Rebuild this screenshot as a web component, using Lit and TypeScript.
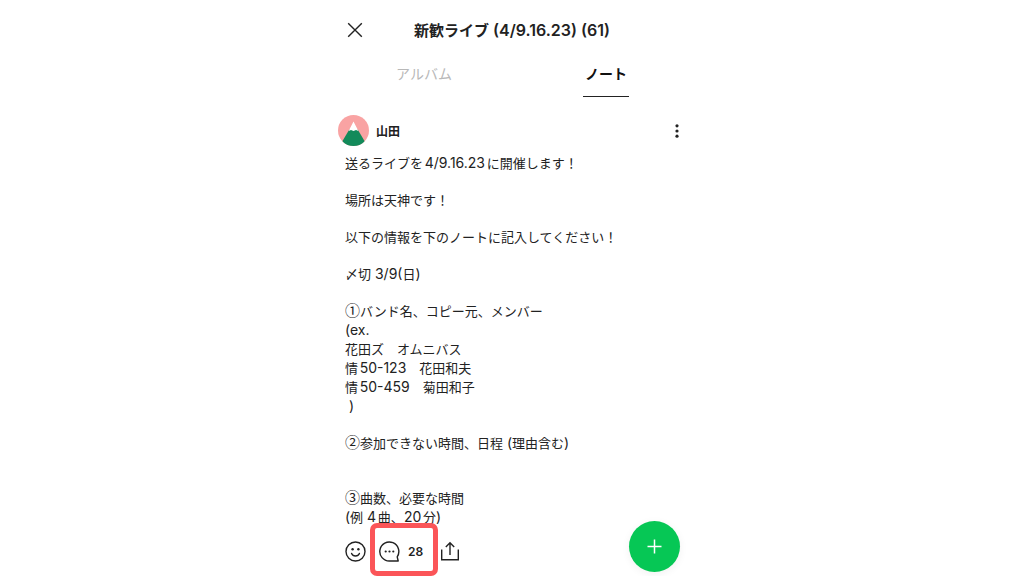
import { LitElement, html, css } from "lit";
import { customElement, state } from "lit/decorators.js";

/** Wraps Latin runs and circled numbers so that each gets its own face and size. */
const mixed = (text: string) =>
  text.split(/([①-⑳]|[ -~]+)/).map((part, i) => {
    if (i % 2 === 0) return part;
    return html`<span class=${/[①-⑳]/.test(part) ? "circled" : "latin"}>${part}</span>`;
  });

const paragraphs: { lines: string[]; apart?: boolean }[] = [
  { lines: ["送るライブを4/9.16.23に開催します！"] },
  { lines: ["場所は天神です！"] },
  { lines: ["以下の情報を下のノートに記入してください！"] },
  { lines: ["〆切 3/9(日)"] },
  {
    lines: [
      "①バンド名、コピー元、メンバー",
      "(ex.",
      "花田ズ　オムニバス",
      "情50-123　花田和夫",
      "情50-459　菊田和子",
      " )",
    ],
  },
  { lines: ["②参加できない時間、日程 (理由含む)"] },
  { lines: ["③曲数、必要な時間", "(例 4曲、20分)"], apart: true },
];

@customElement("app-root")
export class AppRoot extends LitElement {
  static styles = css`
    :host {
      display: block;
      box-sizing: border-box;
      min-height: 100vh;
      padding-left: 6px;
      background: #fff;
      color: #222;
      font-family: "Noto Sans CJK JP", sans-serif;
      font-size: 13px;
      line-height: 19px;
    }
    button {
      display: flex;
      align-items: center;
      justify-content: center;
      margin: 0;
      padding: 0;
      border: 0;
      background: none;
      color: inherit;
      font: inherit;
      cursor: pointer;
    }
    svg {
      display: block;
      flex: none;
    }
    .latin {
      font-family: Inter, sans-serif;
      font-size: 14px;
      line-height: 1;
    }
    .circled {
      font-size: 15px;
      line-height: 1;
    }
    .screen {
      position: relative;
      max-width: 364px;
      min-height: 100vh;
      margin: 0 auto;
    }
    .header {
      display: grid;
      grid-template-columns: 44px 1fr 50px;
      align-items: center;
      box-sizing: border-box;
      height: 59px;
      padding-top: 1px;
    }
    .title {
      margin: 0;
      text-align: center;
      font-size: 15px;
      font-weight: 600;
      line-height: 24px;
      white-space: nowrap;
    }
    .title .latin {
      font-size: 16px;
    }
    .tabs {
      display: grid;
      grid-template-columns: 1fr 1fr;
      justify-items: center;
    }
    .tab {
      padding: 4px 2px 13px;
      border-bottom: 1px solid transparent;
      color: #b8b8b8;
      font-size: 14px;
      line-height: 20px;
    }
    .tab.active {
      border-bottom-color: #222;
      color: #111;
      font-weight: 600;
    }
    .post {
      padding: 18px 12px 0 5px;
    }
    .author {
      display: flex;
      align-items: center;
      gap: 7px;
    }
    .name {
      flex: 1;
      font-size: 12px;
      font-weight: 600;
    }
    .body {
      display: grid;
      gap: 18px;
      padding: 7px 0 0 7px;
      text-autospace: normal;
    }
    .body p {
      margin: 0;
      white-space: pre-wrap;
    }
    .body .apart {
      padding-top: 18px;
    }
    .line {
      display: block;
    }
    .actions {
      display: flex;
      align-items: center;
      gap: 13px;
      height: 32px;
      margin-top: 9px;
      padding-left: 7px;
    }
    .comments {
      position: relative;
      gap: 8px;
      padding-right: 4px;
      font-family: Inter, sans-serif;
      font-size: 12px;
      font-weight: 600;
    }
    .comments::after {
      content: "";
      position: absolute;
      inset: -18px -11px -14px -9px;
      border: 5px solid #fb5558;
      border-radius: 7px;
    }
    .add {
      position: absolute;
      right: 17px;
      bottom: 4px;
      width: 51px;
      height: 51px;
      border-radius: 50%;
      background: #06c755;
      color: #fff;
      box-shadow: 0 2px 8px rgba(0, 0, 0, 0.06);
    }
  `;

  @state() private tab = "note";

  private tabButton(id: string, label: string) {
    const on = this.tab === id;
    return html`<button
      class="tab ${on ? "active" : ""}"
      role="tab"
      aria-selected=${on ? "true" : "false"}
      @click=${() => (this.tab = id)}
    >${label}</button>`;
  }

  render() {
    return html`
      <main class="screen">
        <header class="header">
          <button aria-label="閉じる">
            <svg width="16" height="16" viewBox="0 0 16 16" fill="none" stroke="#222" stroke-width="1.4">
              <path d="M1.2 1.2 14.8 14.8M14.8 1.2 1.2 14.8" />
            </svg>
          </button>
          <h1 class="title">${mixed("新歓ライブ (4/9.16.23) (61)")}</h1>
        </header>
        <nav class="tabs" role="tablist">
          ${this.tabButton("album", "アルバム")} ${this.tabButton("note", "ノート")}
        </nav>
        <article class="post">
          <div class="author">
            <svg width="31" height="31" viewBox="0 0 31 31" aria-hidden="true">
              <defs><clipPath id="round"><circle cx="15.5" cy="15.5" r="15.5" /></clipPath></defs>
              <g clip-path="url(#round)">
                <rect width="31" height="31" fill="#f9a3a3" />
                <path d="M11.3 14.5 4.5 26v5h22v-5l-6.8-11.5z" fill="#128a5a" />
                <path d="M15.5 6.5 10.6 16l2.4-.9 2.5 1 2.5-1 2.4.9z" fill="#fff" />
              </g>
            </svg>
            <span class="name">山田</span>
            <button aria-label="メニュー">
              <svg width="16" height="20" viewBox="0 0 16 20" fill="#222">
                <circle cx="8" cy="4.8" r="1.6" /><circle cx="8" cy="10" r="1.6" /><circle cx="8" cy="15.2" r="1.6" />
              </svg>
            </button>
          </div>
          <div class="body">
            ${paragraphs.map(
              (p) => html`<p class=${p.apart ? "apart" : ""}>${p.lines.map(
                (line) => html`<span class="line">${mixed(line)}</span>`
              )}</p>`
            )}
          </div>
          <div class="actions">
            <button aria-label="リアクション">
              <svg width="21" height="21" viewBox="0 0 21 21" fill="none" stroke="#222" stroke-width="1.4" stroke-linecap="round">
                <circle cx="10.5" cy="10.5" r="9.5" />
                <path d="M6.6 12.4c.7 1.7 2.2 2.6 3.9 2.6s3.2-.9 3.9-2.6" />
                <circle cx="7.6" cy="8.2" r="1.2" fill="#222" stroke="none" />
                <circle cx="13.4" cy="8.2" r="1.2" fill="#222" stroke="none" />
              </svg>
            </button>
            <button class="comments" aria-label="コメント 28">
              <svg width="21" height="21" viewBox="0 0 21 21" fill="none" stroke="#222" stroke-width="1.4" stroke-linejoin="round">
                <path d="M18.2 15.8A9.5 9.5 0 1 0 10.5 20h8.7z" />
                <g fill="#222" stroke="none">
                  <circle cx="6.7" cy="10.5" r="1.1" /><circle cx="10.5" cy="10.5" r="1.1" /><circle cx="14.3" cy="10.5" r="1.1" />
                </g>
              </svg>
              <span>28</span>
            </button>
            <button aria-label="シェア">
              <svg width="20" height="20" viewBox="0 0 20 20" fill="none" stroke="#222" stroke-width="1.4">
                <path d="M1.7 8.5v10.3h16.6V8.5M10 14V1.8M5.800 6 10 1.800 14.200 6" />
              </svg>
            </button>
          </div>
        </article>
        <button class="add" aria-label="ノートを作成">
          <svg width="15" height="15" viewBox="0 0 15 15" fill="none" stroke="currentColor" stroke-width="1.5">
            <path d="M7.5 .5v14M.5 7.500h14" />
          </svg>
        </button>
      </main>
    `;
  }
}
